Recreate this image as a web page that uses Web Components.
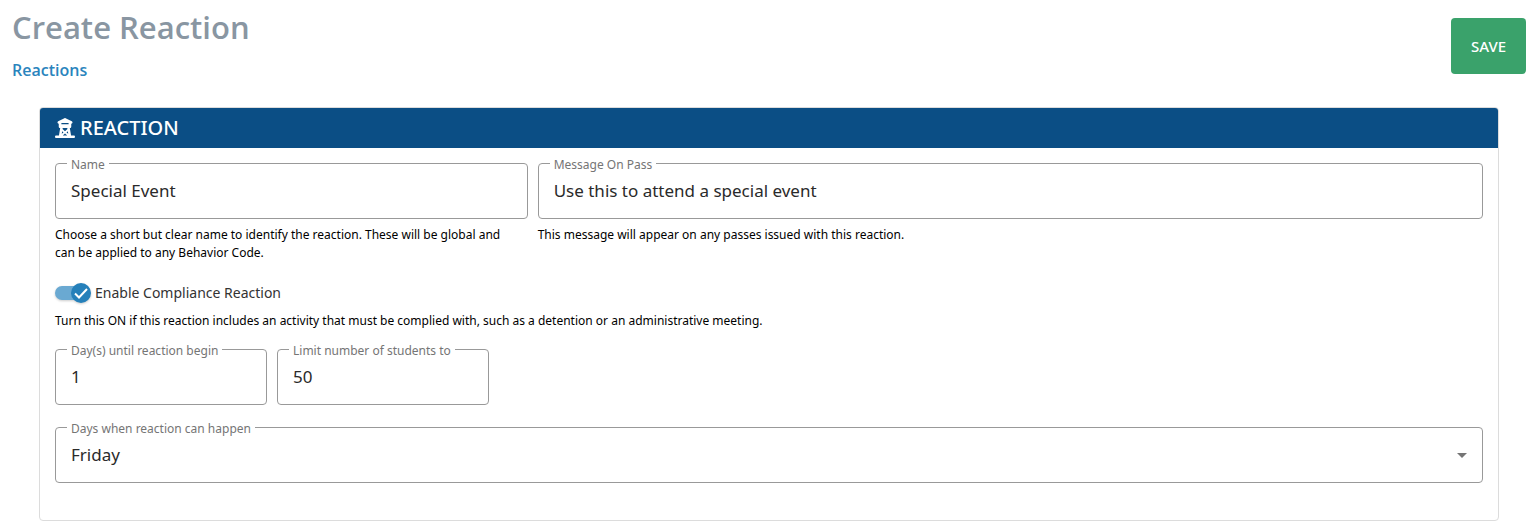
<!DOCTYPE html>
<html lang="en">
<head>
<meta charset="utf-8">
<title>Create Reaction</title>
<style>
  body { margin: 0; background: #fff; color: #000; font-family: "Open Sans", "Noto Sans", sans-serif; }
</style>
</head>
<body>
<reaction-page></reaction-page>

<script>
const define = (name, html, setup) => {
  const template = document.createElement('template');
  template.innerHTML = html;
  customElements.define(name, class extends HTMLElement {
    constructor() {
      super();
      this.attachShadow({ mode: 'open' }).append(template.content.cloneNode(true));
    }
    connectedCallback() {
      if (setup) setup(this.shadowRoot, this);
    }
  });
};

// Page title with breadcrumb link; actions go in the slot.
define('page-header', `
  <style>
    :host { display: flex; justify-content: space-between; align-items: flex-start; padding: 5px 7px 0 12px; }
    h1 { margin: 0 0 11px; font-size: 31px; line-height: 44px; font-weight: 600; color: #8996a2; }
    a { display: block; font-size: 16px; line-height: 20px; font-weight: 600; color: #2a84bd; text-decoration: none; }
    .actions { padding-top: 13px; }
  </style>
  <div><h1></h1><nav><a href="#reactions"></a></nav></div>
  <div class="actions"><slot></slot></div>
`, (root, host) => {
  root.querySelector('h1').textContent = host.getAttribute('heading');
  root.querySelector('a').textContent = host.getAttribute('crumb');
});

define('save-button', `
  <style>
    :host { display: block; }
    button { height: 56px; padding: 0 20px; border: 0; border-radius: 4px; background: #3aa26b; color: #fff;
      font: 500 15px/20px "Noto Sans", sans-serif; cursor: pointer; }
  </style>
  <button type="button"><slot></slot></button>
`);

define('panel-card', `
  <style>
    :host { display: block; border: 1px solid #dcdcdc; border-radius: 4px; overflow: hidden; }
    header { display: flex; align-items: center; gap: 5px; height: 40px; padding: 0 15px; background: #0b4e85; color: #fff; }
    svg { width: 20px; height: 20px; fill: currentColor; }
    h2 { margin: 0; font: 500 20px/28px "Noto Sans", sans-serif; }
    .body { padding: 7px 15px 37px; }
  </style>
  <header>
    <svg viewBox="0 0 512 512" aria-hidden="true"><path d="M241.7 3.4c9-4.5 19.6-4.5 28.6 0l160 80c15.8 7.9 22.2 27.1 14.3 42.9C439 137.5 427.7 144 416 144v80c0 17.7-14.3 32-32 32h-4.9l32 192H480c17.7 0 32 14.3 32 32s-14.3 32-32 32H384 128 32c-17.7 0-32-14.3-32-32s14.3-32 32-32h68.9l32-192H128c-17.7 0-32-14.3-32-32V144c-11.7 0-23-6.5-28.6-17.7c-7.9-15.8-1.5-35 14.3-42.9l160-80zM314.5 448L256 399.2 197.5 448h117zM197.8 256l-4.7 28.3L256 336.8l62.9-52.4L314.2 256H197.8zm-13.9 83.2l-11.2 67L218.5 368l-34.6-28.8zM293.5 368l45.8 38.1-11.2-67L293.5 368zM176 128c-8.8 0-16 7.2-16 16s7.2 16 16 16H336c8.8 0 16-7.2 16-16s-7.2-16-16-16H176z"/></svg>
    <h2></h2>
  </header>
  <div class="body"><slot></slot></div>
`, (root, host) => { root.querySelector('h2').textContent = host.getAttribute('heading'); });

// Shared outline: the legend opens the notch in the top border.
const outline = `
    :host { display: block; min-width: 0; }
    fieldset { margin: 0; min-width: 0; padding: 0 0 8px; border: 1px solid #999; border-radius: 4px; }
    legend { margin-left: 11px; padding: 2px 4px 0; font: 400 12px/15px "Noto Sans", sans-serif; color: #757575; }
    label { display: block; }
    input, select { display: block; box-sizing: border-box; width: 100%; height: 38px; margin: 0; padding: 0 15px;
      border: 0; outline: 0; background: transparent; color: #2a2a2a; font: 400 17px/24px "Noto Sans", sans-serif; }
`;

define('outlined-field', `
  <style>${outline}
    input { padding-bottom: 2px; }
  </style>
  <fieldset><legend><label for="control"></label></legend><input id="control" type="text"></fieldset>
`, (root, host) => {
  root.querySelector('label').textContent = host.getAttribute('label');
  root.querySelector('input').value = host.getAttribute('value');
});

define('outlined-select', `
  <style>${outline}
    .control { display: grid; align-items: center; }
    select, svg { grid-area: 1 / 1; }
    select { appearance: none; }
    svg { width: 10px; height: 5px; margin-right: 15px; justify-self: end; fill: #757575; pointer-events: none; }
  </style>
  <fieldset><legend><label for="control"></label></legend>
    <div class="control">
      <select id="control"></select>
      <svg viewBox="0 0 10 5" aria-hidden="true"><path d="M0 0h10L5 5z"/></svg>
    </div>
  </fieldset>
`, (root, host) => {
  root.querySelector('label').textContent = host.getAttribute('label');
  root.querySelector('select').replaceChildren(new Option(host.getAttribute('value')));
});

define('help-text', `
  <style>
    :host { display: block; font: 400 12px/18px "Noto Sans", sans-serif; color: #000; }
  </style>
  <slot></slot>
`);

define('toggle-switch', `
  <style>
    :host { display: block; }
    label { display: flex; align-items: center; gap: 4px; height: 20px; font: 400 14px/20px "Noto Sans", sans-serif; color: #333; }
    .switch { display: grid; width: 36px; height: 20px; }
    input, svg { grid-area: 1 / 1; width: 36px; height: 20px; margin: 0; overflow: visible; }
    input { appearance: none; }
    svg { pointer-events: none; filter: drop-shadow(0 1px 1px rgba(0, 0, 0, .2)); }
  </style>
  <label>
    <span class="switch">
      <input type="checkbox" checked>
      <svg viewBox="0 0 36 20" aria-hidden="true">
        <rect y="3" width="34" height="14" rx="7" fill="#6aa9d2"/>
        <circle cx="26" cy="10" r="10" fill="#2580ba"/>
        <path d="M20 10.5l4 4 8-8.5" fill="none" stroke="#fff" stroke-width="2"/>
      </svg>
    </span>
    <span><slot></slot></span>
  </label>
`);

define('reaction-page', `
  <style>
    :host { display: block; }
    panel-card { margin: 27px 34px 7px 39px; }
    .main { display: grid; grid-template-columns: 1fr 2fr; gap: 10px; }
    .main help-text { margin-top: 7px; padding-right: 10px; }
    toggle-switch { margin: 21px 0 9px; }
    .limits { display: grid; grid-template-columns: 212px 212px; gap: 10px; margin: 11px 0 14px; }
  </style>
  <page-header heading="Create Reaction" crumb="Reactions"><save-button>SAVE</save-button></page-header>
  <main>
    <panel-card heading="REACTION">
      <div class="main">
        <div>
          <outlined-field label="Name" value="Special Event"></outlined-field>
          <help-text>Choose a short but clear name to identify the reaction. These will be global and can be applied to any Behavior Code.</help-text>
        </div>
        <div>
          <outlined-field label="Message On Pass" value="Use this to attend a special event"></outlined-field>
          <help-text>This message will appear on any passes issued with this reaction.</help-text>
        </div>
      </div>
      <toggle-switch>Enable Compliance Reaction</toggle-switch>
      <help-text>Turn this ON if this reaction includes an activity that must be complied with, such as a detention or an administrative meeting.</help-text>
      <div class="limits">
        <outlined-field label="Day(s) until reaction begin" value="1"></outlined-field>
        <outlined-field label="Limit number of students to" value="50"></outlined-field>
      </div>
      <outlined-select label="Days when reaction can happen" value="Friday"></outlined-select>
    </panel-card>
  </main>
`);
</script>
</body>
</html>
